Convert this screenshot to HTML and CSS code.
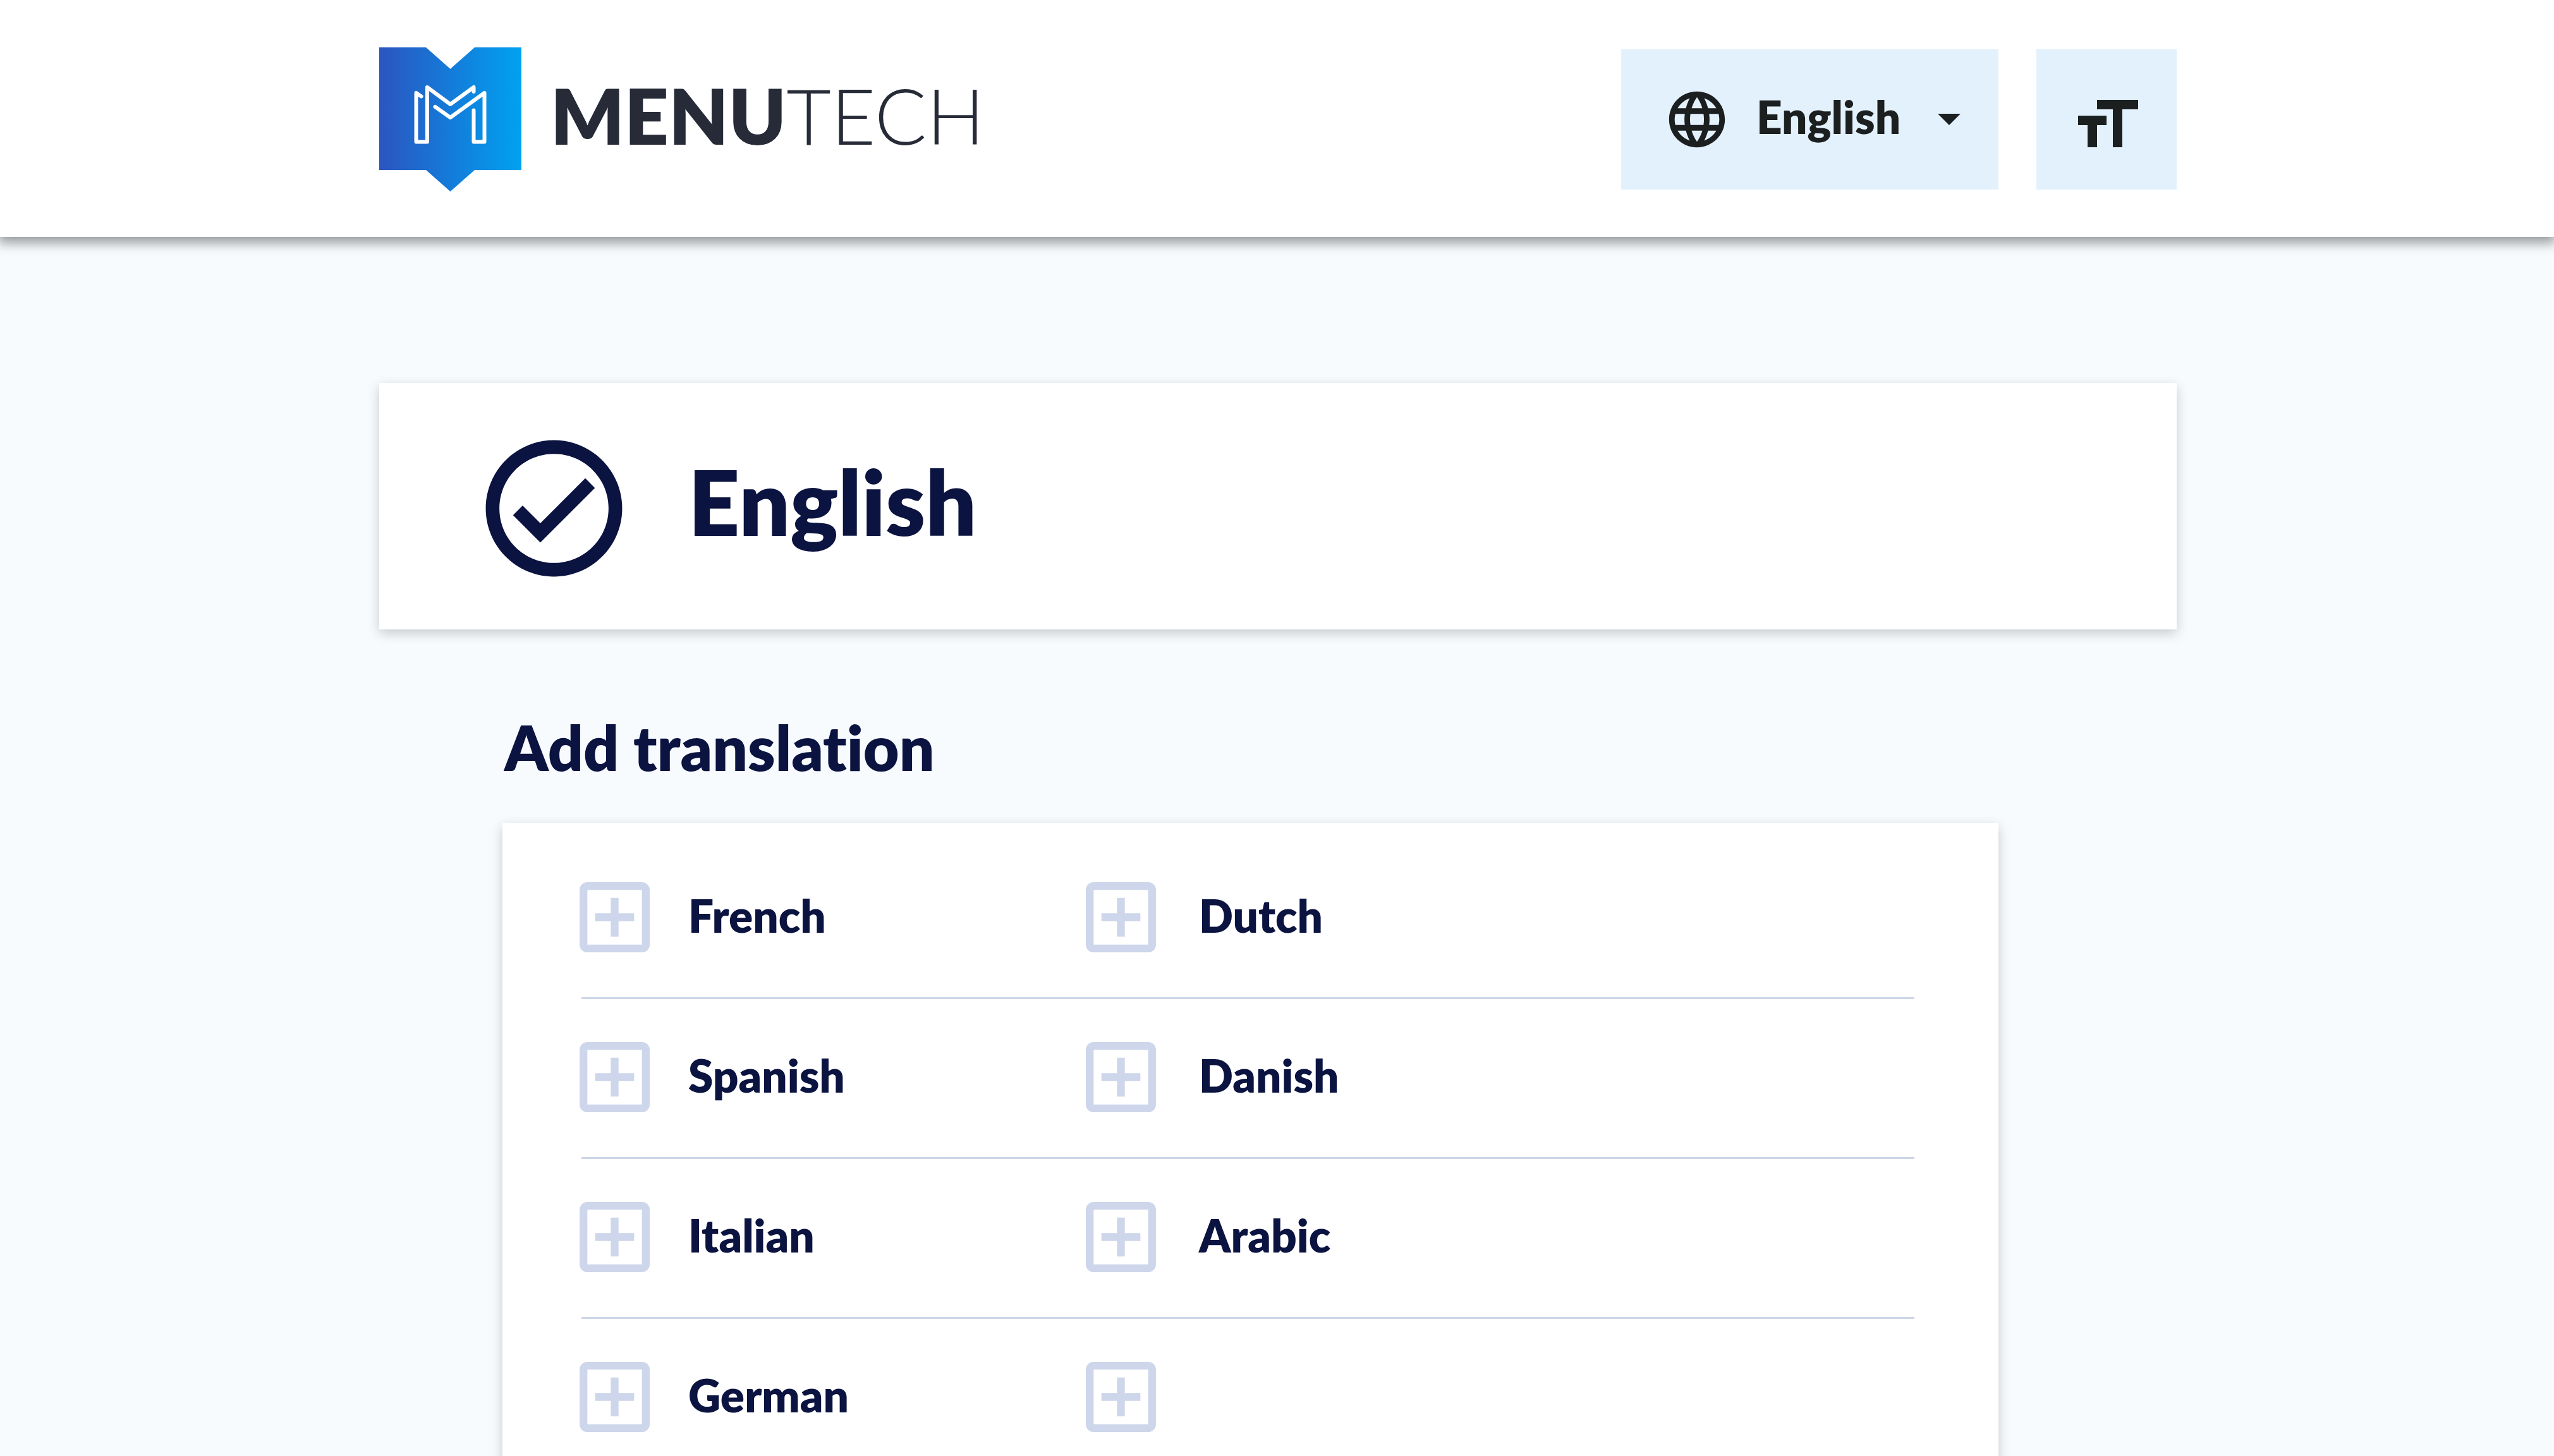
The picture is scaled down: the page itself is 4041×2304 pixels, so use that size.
FILE: index.html
```html
<!DOCTYPE html>
<html lang="en">

<head>
    <meta charset="utf-8">
    <title>Menutech - Translations</title>
    <link rel="stylesheet" href="styles.css">
</head>

<body>
    <!-- Shared icons -->
    <svg class="sprite" aria-hidden="true">
        <symbol id="add" viewBox="3 3 18 18">
            <path fill-rule="evenodd" d="M5 3h14a2 2 0 0 1 2 2v14a2 2 0 0 1-2 2H5a2 2 0 0 1-2-2V5a2 2 0 0 1 2-2zm0 2v14h14V5H5zm6 2h2v4h4v2h-4v4h-2v-4H7v-2h4z"/>
        </symbol>
    </svg>

    <header class="header">
        <div class="container bar">
            <a class="logo" href="#">
                <svg class="shield" viewBox="0 0 225 228">
                    <defs>
                        <linearGradient id="blue">
                            <stop offset="0" stop-color="#2c55c0"/>
                            <stop offset="0.5" stop-color="#147bd9"/>
                            <stop offset="1" stop-color="#00a2f0"/>
                        </linearGradient>
                    </defs>
                    <path fill="url(#blue)" d="M0 0H74L112.500 34L151 0H225V194H151L112.500 228L74 194H0z"/>
                    <path class="fold" d="M66.500 77.500L58.500 72V149.500H76V63L112.500 90L149.500 63V70M88.500 94L112.500 111L166.500 72V149.500H149.500V99.500"/>
                </svg>
                <span class="wordmark"><b>MENU</b>TECH</span>
            </a>
            <div class="tools">
                <label class="language">
                    <svg class="globe" viewBox="0 0 24 24">
                        <path d="M11.990 2C6.470 2 2 6.480 2 12s4.470 10 9.990 10C17.520 22 22 17.520 22 12S17.520 2 11.990 2zm6.930 6h-2.950c-.32-1.250-.78-2.450-1.380-3.560 1.840.63 3.370 1.910 4.330 3.560zM12 4.040c.83 1.200 1.480 2.530 1.910 3.960h-3.820c.43-1.430 1.080-2.760 1.910-3.960zM4.260 14C4.100 13.360 4 12.690 4 12s.1-1.360.26-2h3.380c-.08.66-.14 1.320-.14 2 0 .68.06 1.340.14 2H4.260zm.82 2h2.950c.32 1.250.78 2.450 1.380 3.560-1.840-.63-3.370-1.900-4.330-3.560zm2.950-8H5.080c.96-1.660 2.490-2.930 4.330-3.560C8.810 5.550 8.350 6.750 8.030 8zM12 19.960c-.83-1.200-1.480-2.530-1.910-3.960h3.820c-.43 1.430-1.080 2.760-1.910 3.960zM14.340 14H9.660c-.09-.66-.16-1.320-.16-2 0-.68.07-1.350.16-2h4.680c.09.65.16 1.320.16 2 0 .68-.07 1.340-.16 2zm.25 5.560c.6-1.110 1.060-2.310 1.380-3.560h2.950c-.96 1.650-2.490 2.930-4.330 3.560zM16.360 14c.08-.66.14-1.320.14-2 0-.68-.06-1.340-.14-2h3.380c.16.64.26 1.310.26 2s-.1 1.360-.26 2h-3.380z"/>
                    </svg>
                    <select aria-label="Language">
                        <option>English</option>
                    </select>
                    <svg class="arrow" viewBox="0 0 36 18">
                        <path d="M0 0h36L18 18z"/>
                    </svg>
                </label>
                <button class="text-size" aria-label="Text size">
                    <svg viewBox="0 0 24 24">
                        <path d="M9 4v3h5v12h3V7h5V4H9zm-6 8h3v7h3v-7h3V9H3v3z"/>
                    </svg>
                </button>
            </div>
        </div>
    </header>

    <main class="container">
        <section class="card current">
            <svg class="check" viewBox="0 0 24 24">
                <path d="M16.590 7.580L10 14.170l-2.590-2.580L6 13l4 4 8-8zM12 2C6.480 2 2 6.480 2 12s4.480 10 10 10 10-4.480 10-10S17.520 2 12 2zm0 18c-4.420 0-8-3.580-8-8s3.580-8 8-8 8 3.580 8 8-3.580 8-8 8z"/>
            </svg>
            <h1>English</h1>
        </section>

        <section class="translations">
            <h2>Add translation</h2>
            <div class="card panel">
                <div class="row">
                    <button class="add"><svg><use href="#add"/></svg><span>French</span></button>
                    <button class="add"><svg><use href="#add"/></svg><span>Dutch</span></button>
                </div>
                <div class="row">
                    <button class="add"><svg><use href="#add"/></svg><span>Spanish</span></button>
                    <button class="add"><svg><use href="#add"/></svg><span>Danish</span></button>
                </div>
                <div class="row">
                    <button class="add"><svg><use href="#add"/></svg><span>Italian</span></button>
                    <button class="add"><svg><use href="#add"/></svg><span>Arabic</span></button>
                </div>
                <div class="row">
                    <button class="add"><svg><use href="#add"/></svg><span>German</span></button>
                    <button class="add" aria-label="Add language"><svg><use href="#add"/></svg></button>
                </div>
            </div>
        </section>
    </main>
</body>

</html>
```

FILE: styles.css
```css
* {
    box-sizing: border-box;
}

body {
    margin: 0;
    height: 100vh;
    overflow-y: auto;
    scrollbar-width: none;
    background: #f7fbfe;
    color: #0b1340;
    font-family: Lato, "Open Sans", sans-serif;
    font-size: 71px;
    font-weight: 800;
    font-variant-ligatures: none;
}

h1, h2 {
    margin: 0;
    font-weight: 800;
}

svg {
    display: block;
    flex: none;
    fill: currentColor;
}

button, select {
    border: 0;
    padding: 0;
    background: none;
    color: inherit;
    font: inherit;
    cursor: pointer;
}

.sprite {
    position: absolute;
    width: 0;
    height: 0;
}

.container {
    max-width: 2847px;
    margin: 0 auto;
    padding-left: 3px;
}

/* Header */
.header {
    padding: 75px 0 72px;
    background: white;
    box-shadow: 0 6px 18px 3px rgba(0, 0, 0, 0.4);
}

.bar, .logo, .tools, .language {
    display: flex;
    align-items: center;
}

.bar {
    justify-content: space-between;
}

.logo {
    gap: 46px;
    color: #262b37;
    text-decoration: none;
}

.shield {
    width: 225px;
    height: 228px;
}

.fold {
    fill: none;
    stroke: white;
    stroke-width: 6;
    stroke-linecap: round;
    stroke-linejoin: round;
}

.wordmark {
    padding-bottom: 14px;
    font-size: 122px;
    font-weight: 300;
    line-height: 140px;
}

.wordmark b {
    font-weight: 800;
}

.tools {
    gap: 60px;
    color: #1c1f20;
}

.language {
    width: 597px;
    height: 222px;
    padding: 0 60px 0 67px;
    background: #e3f1fd;
}

.globe {
    width: 106px;
    height: 106px;
}

.language select {
    flex: 1;
    margin-left: 41px;
    padding-bottom: 10px;
    appearance: none;
}

.arrow {
    width: 36px;
    height: 18px;
}

.text-size {
    width: 222px;
    height: 222px;
    padding: 17px 51px 0;
    background: #e3f1fd;
}

.text-size svg {
    width: 120px;
    height: 120px;
}

/* Content */
.card {
    background: white;
    box-shadow: 0 6px 18px rgba(0, 0, 0, 0.2);
}

.current {
    display: flex;
    align-items: center;
    gap: 83px;
    margin-top: 231px;
    height: 390px;
    padding: 6px 147px 0;
}

.check {
    width: 259px;
    height: 259px;
}

.current h1 {
    padding-bottom: 22px;
    font-size: 142px;
    line-height: 164px;
}

.translations {
    margin: 126px 282px 0 195px;
}

.translations h2 {
    padding-left: 3px;
    font-size: 98px;
    line-height: 120px;
    margin-bottom: 60px;
}

.panel {
    padding: 26px 133px 26px 125px;
}

.row {
    display: flex;
    height: 253px;
    padding-bottom: 3px;
    border-bottom: 3px solid #cdd6ea;
}

.row:last-child {
    border-bottom-color: transparent;
}

.add {
    display: flex;
    align-items: center;
    gap: 61px;
    width: 801px;
    margin-left: -3px;
}

.add + .add {
    gap: 68px;
    margin-left: 0;
}

.add svg {
    width: 111px;
    height: 111px;
    color: #cdd6ea;
}

.add span {
    padding-bottom: 6px;
}
```
